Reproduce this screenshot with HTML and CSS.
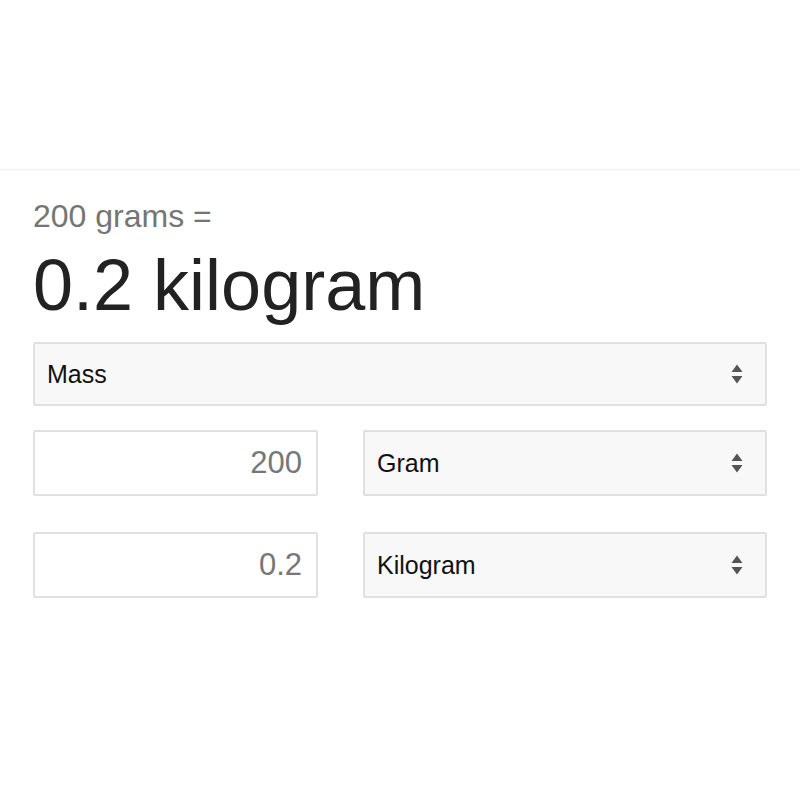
FILE: index.html
```html
<!DOCTYPE html>
<html lang="en">
<head>
    <meta charset="UTF-8">
    <title>Unit converter</title>
    <link rel="stylesheet" href="styles.css">
</head>
<body>
    <div class="topbar"></div>
    <div class="converter">
        <div class="equation">200 grams =</div>
        <div class="answer">0.2 kilogram</div>

        <div class="select wide">
            <span>Mass</span>
            <svg class="arrows" width="12" height="20" viewBox="0 0 12 20"><path d="M6 0.5 L11.5 8 H0.5 Z M6 19.5 L11.5 12 H0.5 Z" fill="#555"/></svg>
        </div>

        <div class="row">
            <div class="field">200</div>
            <div class="select">
                <span>Gram</span>
                <svg class="arrows" width="12" height="20" viewBox="0 0 12 20"><path d="M6 0.5 L11.5 8 H0.5 Z M6 19.5 L11.5 12 H0.5 Z" fill="#555"/></svg>
            </div>
        </div>

        <div class="row">
            <div class="field">0.2</div>
            <div class="select">
                <span>Kilogram</span>
                <svg class="arrows" width="12" height="20" viewBox="0 0 12 20"><path d="M6 0.5 L11.5 8 H0.5 Z M6 19.5 L11.5 12 H0.5 Z" fill="#555"/></svg>
            </div>
        </div>
    </div>
</body>
</html>
```

FILE: styles.css
```css
body {
    margin: 0;
    padding: 0;
    background-color: #fff;
    font-family: 'Liberation Sans', Arial, sans-serif;
    color: #222;
}

.topbar {
    height: 169px;
    border-bottom: 1px solid #f1f1f1;
    box-shadow: 0 1px 3px rgba(0, 0, 0, 0.03);
}

.converter {
    padding: 28px 33px 0 33px;
}

.equation {
    font-size: 32px;
    line-height: 36px;
    color: #757575;
}

.answer {
    margin-top: 11px;
    font-size: 72px;
    line-height: 80px;
    color: #222;
}

.select {
    box-sizing: border-box;
    height: 66px;
    display: flex;
    align-items: center;
    justify-content: space-between;
    padding: 0 22px 0 12px;
    background-color: #f8f8f8;
    border: 2px solid #e0e0e0;
    border-radius: 2px;
    font-size: 25px;
    color: #111;
}

.select.wide {
    margin-top: 17px;
    height: 64px;
}

.arrows {
    flex: none;
}

.row {
    display: grid;
    grid-template-columns: 285px 1fr;
    gap: 45px;
    margin-top: 24px;
}

.row + .row {
    margin-top: 36px;
}

.field {
    box-sizing: border-box;
    height: 66px;
    display: flex;
    align-items: center;
    justify-content: flex-end;
    padding: 0 14px;
    background-color: #fff;
    border: 2px solid #e0e0e0;
    border-radius: 2px;
    font-size: 31px;
    color: #777;
}
```
